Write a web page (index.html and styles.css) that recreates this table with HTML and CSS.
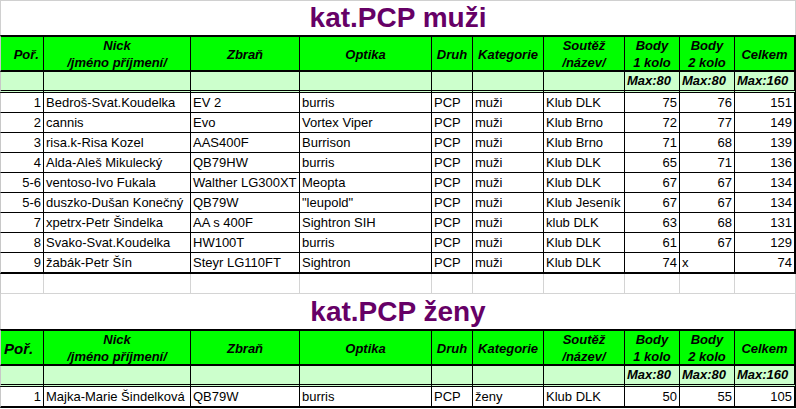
FILE: index.html
```html
<!DOCTYPE html>
<html lang="cs">
<head>
<meta charset="utf-8">
<title>kat.PCP</title>
<link rel="stylesheet" href="styles.css">
</head>
<body>
<div class="sheet">
  <div class="title first">kat.PCP muži</div>

  <div class="row head">
    <div class="c por">Poř.</div>
    <div class="c">Nick<br>/jméno příjmení/</div>
    <div class="c">Zbraň</div>
    <div class="c">Optika</div>
    <div class="c">Druh</div>
    <div class="c">Kategorie</div>
    <div class="c">Soutěž<br>/název/</div>
    <div class="c">Body<br>1 kolo</div>
    <div class="c">Body<br>2 kolo</div>
    <div class="c">Celkem</div>
  </div>
  <div class="row sub">
    <div class="c"></div><div class="c"></div><div class="c"></div><div class="c"></div><div class="c"></div>
    <div class="c"></div><div class="c"></div><div class="c">Max:80</div><div class="c">Max:80</div><div class="c">Max:160</div>
  </div>

  <div class="row data">
    <div class="c n">1</div><div class="c">Bedroš-Svat.Koudelka</div><div class="c">EV 2</div><div class="c">burris</div><div class="c">PCP</div>
    <div class="c">muži</div><div class="c">Klub DLK</div><div class="c n">75</div><div class="c n">76</div><div class="c n">151</div>
  </div>
  <div class="row data">
    <div class="c n">2</div><div class="c">cannis</div><div class="c">Evo</div><div class="c">Vortex Viper</div><div class="c">PCP</div>
    <div class="c">muži</div><div class="c">Klub Brno</div><div class="c n">72</div><div class="c n">77</div><div class="c n">149</div>
  </div>
  <div class="row data">
    <div class="c n">3</div><div class="c">risa.k-Risa Kozel</div><div class="c">AAS400F</div><div class="c">Burrison</div><div class="c">PCP</div>
    <div class="c">muži</div><div class="c">Klub Brno</div><div class="c n">71</div><div class="c n">68</div><div class="c n">139</div>
  </div>
  <div class="row data">
    <div class="c n">4</div><div class="c">Alda-Aleš Mikulecký</div><div class="c">QB79HW</div><div class="c">burris</div><div class="c">PCP</div>
    <div class="c">muži</div><div class="c">Klub DLK</div><div class="c n">65</div><div class="c n">71</div><div class="c n">136</div>
  </div>
  <div class="row data">
    <div class="c n">5-6</div><div class="c">ventoso-Ivo Fukala</div><div class="c">Walther LG300XT</div><div class="c">Meopta</div><div class="c">PCP</div>
    <div class="c">muži</div><div class="c">Klub DLK</div><div class="c n">67</div><div class="c n">67</div><div class="c n">134</div>
  </div>
  <div class="row data">
    <div class="c n">5-6</div><div class="c">duszko-Dušan Konečný</div><div class="c">QB79W</div><div class="c">"leupold"</div><div class="c">PCP</div>
    <div class="c">muži</div><div class="c">Klub Jeseník</div><div class="c n">67</div><div class="c n">67</div><div class="c n">134</div>
  </div>
  <div class="row data">
    <div class="c n">7</div><div class="c">xpetrx-Petr Šindelka</div><div class="c">AA s 400F</div><div class="c">Sightron SIH</div><div class="c">PCP</div>
    <div class="c">muži</div><div class="c">klub DLK</div><div class="c n">63</div><div class="c n">68</div><div class="c n">131</div>
  </div>
  <div class="row data">
    <div class="c n">8</div><div class="c">Svako-Svat.Koudelka</div><div class="c">HW100T</div><div class="c">burris</div><div class="c">PCP</div>
    <div class="c">muži</div><div class="c">Klub DLK</div><div class="c n">61</div><div class="c n">67</div><div class="c n">129</div>
  </div>
  <div class="row data last">
    <div class="c n">9</div><div class="c">žabák-Petr Šín</div><div class="c">Steyr LG110FT</div><div class="c">Sightron</div><div class="c">PCP</div>
    <div class="c">muži</div><div class="c">Klub DLK</div><div class="c n">74</div><div class="c">x</div><div class="c n">74</div>
  </div>

  <div class="row blank">
    <div class="c"></div><div class="c"></div><div class="c"></div><div class="c"></div><div class="c"></div>
    <div class="c"></div><div class="c"></div><div class="c"></div><div class="c"></div><div class="c"></div>
  </div>

  <div class="title">kat.PCP ženy</div>

  <div class="row head">
    <div class="c por big">Poř.</div>
    <div class="c">Nick<br>/jméno příjmení/</div>
    <div class="c">Zbraň</div>
    <div class="c">Optika</div>
    <div class="c">Druh</div>
    <div class="c">Kategorie</div>
    <div class="c">Soutěž<br>/název/</div>
    <div class="c">Body<br>1 kolo</div>
    <div class="c">Body<br>2 kolo</div>
    <div class="c">Celkem</div>
  </div>
  <div class="row sub">
    <div class="c"></div><div class="c"></div><div class="c"></div><div class="c"></div><div class="c"></div>
    <div class="c"></div><div class="c"></div><div class="c">Max:80</div><div class="c">Max:80</div><div class="c">Max:160</div>
  </div>
  <div class="row data last">
    <div class="c n">1</div><div class="c">Majka-Marie Šindelková</div><div class="c">QB79W</div><div class="c">burris</div><div class="c">PCP</div>
    <div class="c">ženy</div><div class="c">Klub DLK</div><div class="c n">50</div><div class="c n">55</div><div class="c n">105</div>
  </div>
</div>
</body>
</html>
```

FILE: styles.css
```css
html, body {
  margin: 0;
  padding: 0;
  background: #ffffff;
}

.sheet {
  width: 796px;
  font-family: "Liberation Sans", Arial, sans-serif;
  font-size: 13px;
  color: #000000;
}

.title {
  box-sizing: border-box;
  height: 35px;
  line-height: 35px;
  text-align: center;
  font-size: 28px;
  font-weight: bold;
  color: #660066;
  border-left: 1px solid #d0d0d0;
  border-right: 1px solid #d0d0d0;
}

.title.first {
  border-top: 1px solid #d0d0d0;
  line-height: 34px;
}

.row {
  display: grid;
  grid-template-columns: 44px 147px 109px 132px 41px 71px 81px 55px 55px 61px;
}

.c {
  box-sizing: border-box;
  border-right: 1px solid #000000;
  white-space: nowrap;
  overflow: hidden;
}

.c:first-child {
  border-left: 1px solid #c8c8c8;
}

.c:last-child {
  border-right: 2px solid #000000;
}

/* header row */
.head .c {
  height: 37px;
  background: #00ff00;
  border-top: 2px solid #000000;
  border-bottom: 2px solid #000000;
  font-weight: bold;
  font-style: italic;
  text-align: center;
  line-height: 17px;
  display: flex;
  align-items: center;
  justify-content: center;
  padding-top: 1px;
}

.head .c.por {
  justify-content: flex-end;
  padding-right: 4px;
}

.head .c.por.big {
  font-size: 15px;
  justify-content: flex-start;
  padding-left: 3px;
  padding-right: 0;
}

/* max row */
.sub .c {
  height: 21px;
  background: #ccffcc;
  border-bottom: 3px double #000000;
  font-weight: bold;
  font-style: italic;
  line-height: 18px;
  padding-left: 2px;
}

/* data rows */
.data .c {
  height: 20px;
  border-bottom: 1px solid #000000;
  line-height: 19px;
  padding: 0 2px;
}

.data.last .c {
  height: 21px;
  border-bottom: 2px solid #000000;
}

.data .c.n {
  text-align: right;
}

/* empty spreadsheet row */
.blank .c,
.blank .c:last-child {
  height: 20px;
  border-right: 1px solid #d4d4d4;
  border-bottom: 1px solid #d4d4d4;
}
```
